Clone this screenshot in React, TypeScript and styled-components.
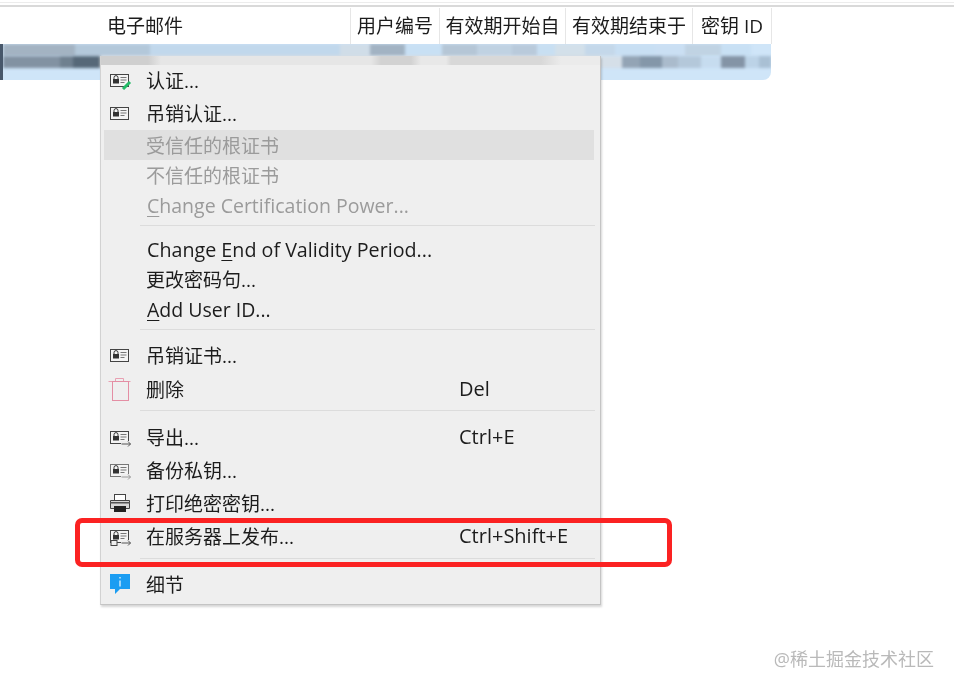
// Context menu of a key manager, over a blurred certificate table
import React from 'react';
import styled, { createGlobalStyle } from 'styled-components';

const GlobalStyle = createGlobalStyle`
  html, body {
    margin: 0;
    height: 100%;
    background: #fff;
    overflow: hidden;
  }
  #root {
    height: 100%;
  }
`;

const FONT = `"Open Sans", "Noto Sans", "Noto Sans CJK SC", sans-serif`;

const Page = styled.div`
  position: relative;
  width: 954px;
  height: 689px;
  overflow: hidden;
  font-family: ${FONT};
  font-size: 19px;
  color: #1c1c1c;
  filter: blur(0.35px);
`;

const TopRule = styled.div`
  height: 5px;
  margin-bottom: 1px;
  border-bottom: 2px solid #d9d9d9;
  background: linear-gradient(#fff 0 2px, #ececec 2px 3px, #fff 3px);
`;

const TableHeader = styled.div`
  display: grid;
  grid-template-columns: 351px 89px 126px 127px 79px;
  width: 772px;
  height: 36px;
`;

const HeaderCell = styled.div<{ $first?: boolean }>`
  display: flex;
  align-items: center;
  justify-content: ${p => (p.$first ? 'flex-start' : 'center')};
  padding-left: ${p => (p.$first ? '107px' : '0')};
  border-right: 1px solid #e6e6e6;
  white-space: nowrap;
  line-height: 36px;
  box-sizing: border-box;
`;

const BlurredRow = styled.div`
  width: 771px;
  height: 36px;
  background: #cfe5f8;
  border-radius: 0 0 8px 0;
  overflow: hidden;
  box-sizing: border-box;
  border-left: 3px solid #47576a;
`;

const Strip = styled.div`
  display: flex;
  height: 12px;
  filter: blur(1.6px);
`;

const Patch = styled.div<{ $w: number; $c: string }>`
  flex: 0 0 ${p => p.$w}px;
  background: ${p => p.$c};
`;

const stripTop: [number, string][] = [
  [72, '#a3b3c2'], [75, '#b3c8da'], [190, '#c1d8ec'], [30, '#d0dde8'],
  [35, '#a2b3c3'], [37, '#c8e0f4'], [35, '#b5c6d6'], [35, '#c0d2e2'], [25, '#b9cadb'],
  [18, '#c8dff2'], [30, '#d3e0ea'], [30, '#c4d8ea'], [40, '#c8dff3'], [30, '#cadff3'],
  [36, '#c0d3e3'], [30, '#c8e0f4'],
];

const stripMid: [number, string][] = [
  [57, '#8292a2'], [13, '#6f808f'], [27, '#566878'], [500, '#d8d8d8'],
  [22, '#d5dfe8'], [18, '#93a4b5'], [22, '#8497a9'], [16, '#aabbcc'], [23, '#b4c8da'],
  [20, '#c6dcef'], [24, '#8494a6'], [14, '#bcd3e7'], [12, '#a9c0d4'], [20, '#c3dbef'],
];

const Menu = styled.div`
  position: absolute;
  left: 100px;
  top: 56px;
  width: 501px;
  height: 549px;
  box-sizing: border-box;
  padding-top: 7px;
  background:
    linear-gradient(90deg, #cfcfcf 0 47px, #e6e6e6 60px 270px, #d2d2d2 280px 310px, #e8e8e8 320px 345px, #d8d8d8 350px 440px, #ebebeb 460px) 0 0 / 100% 9px no-repeat,
    #efefef;
  border-left: 1px solid #d2d2d2;
  border-right: 1px solid #c4c4c4;
  border-bottom: 1px solid #c4c4c4;
  box-shadow: 1px 2px 2px rgba(0, 0, 0, 0.16);
`;

const Item = styled.div<{ $h?: number; $disabled?: boolean; $active?: boolean }>`
  display: grid;
  grid-template-columns: 42px 312px 1fr;
  align-items: center;
  height: ${p => p.$h ?? 30}px;
  margin: 0 6px 0 3px;
  color: ${p => (p.$disabled ? '#9b9b9b' : '#1c1c1c')};
  background: ${p => (p.$active ? '#e0e0e0' : 'transparent')};
  white-space: nowrap;
`;

const IconSlot = styled.span`
  display: flex;
  align-items: center;
  padding-left: 4px;
`;

const LatinLabel = styled.span<{ $size?: number }>`
  font-size: ${p => p.$size ?? 19.7}px;
  padding-left: 1px;
`;

const Shortcut = styled.span`
  font-size: 20px;
  padding-left: 1px;
`;

const Mnemonic = styled.span`
  text-decoration: underline;
  text-underline-offset: 3px;
  text-decoration-thickness: 1px;
`;

const Separator = styled.div<{ $h?: number; $top?: number }>`
  height: ${p => p.$h ?? 15}px;
  box-sizing: border-box;
  padding-top: ${p => p.$top ?? 5}px;
  margin: 0 5px 0 39px;
  &::before {
    content: '';
    display: block;
    height: 1px;
    background: #dcdcdc;
  }
`;

const Highlight = styled.div`
  position: absolute;
  left: 75px;
  top: 518px;
  width: 597px;
  height: 49px;
  box-sizing: border-box;
  border: 5px solid #fb2222;
  border-radius: 7px;
`;

const Watermark = styled.div`
  position: absolute;
  right: 20px;
  top: 646px;
  font-size: 18px;
  line-height: 26px;
  color: #b9b9b9;
  white-space: nowrap;
`;

type CertKind = 'plain' | 'check' | 'export' | 'exportLight' | 'server';

// Small certificate card with a lock, optional badge on the corner
const CertIcon = ({ kind = 'plain' }: { kind?: CertKind }) => {
  const stroke = kind === 'exportLight' ? '#777' : '#444';
  const arrow = kind === 'exportLight' ? '#999' : '#555';
  const hasArrow = kind === 'export' || kind === 'exportLight' || kind === 'server';
  return (
    <svg width="24" height="20" viewBox="0 0 24 20" fill="none">
      <rect x="2.5" y="4.5" width="18" height="12" fill="#f4f4f4" stroke={stroke} />
      <rect x="5" y="9" width="6" height="4.5" fill="#333" />
      <path d="M6 9V7.6a2 2 0 0 1 4 0V9" stroke="#333" />
      <path d="M12.5 7.5h6M12.5 10h6M12.5 12.5h4" stroke="#777" />
      {kind === 'check' && <path d="M15 19l7-7" stroke="#22bb66" strokeWidth="3" />}
      {hasArrow && (
        <>
          <rect x="13" y="14" width="11" height="6" fill="#efefef" />
          <path d="M13.5 17h9M20 14.5l2.5 2.5-2.5 2.5" stroke={arrow} />
        </>
      )}
      {kind === 'server' && <rect x="3" y="14.5" width="6" height="5" fill="#efefef" stroke="#444" />}
    </svg>
  );
};

const TrashIcon = () => (
  <svg width="24" height="26" viewBox="0 0 24 26" fill="none" stroke="#e8a0b2">
    <path d="M0.5 5.5h22M7.5 5.5V2.5h8v3" />
    <rect x="4.5" y="5.5" width="16" height="19" stroke="#e48ea4" />
  </svg>
);

const PrinterIcon = () => (
  <svg width="24" height="22" viewBox="0 0 24 22" fill="none">
    <rect x="6.5" y="2.5" width="11" height="6" fill="#fff" stroke="#444" />
    <path d="M2.5 8.5h19v8h-19z" fill="#d8d8d8" stroke="#444" />
    <rect x="6" y="14" width="12" height="6" fill="#222" />
    <rect x="2" y="10" width="20" height="1.5" fill="#555" />
  </svg>
);

const InfoIcon = () => (
  <svg width="24" height="24" viewBox="0 0 24 24">
    <path d="M2 2h20v15H12l-5 5v-5H2z" fill="#1b9df2" />
    <path d="M12 5v1.5M12 8.5v6" stroke="#bfe4fb" strokeWidth="1.6" />
  </svg>
);

const App = () => (
  <>
    <GlobalStyle />
    <Page>
      <TopRule />
      <TableHeader>
        <HeaderCell $first>电子邮件</HeaderCell>
        <HeaderCell>用户编号</HeaderCell>
        <HeaderCell>有效期开始自</HeaderCell>
        <HeaderCell>有效期结束于</HeaderCell>
        <HeaderCell>密钥 ID</HeaderCell>
      </TableHeader>
      <BlurredRow>
        <Strip>
          {stripTop.map(([w, c], i) => <Patch key={i} $w={w} $c={c} />)}
        </Strip>
        <Strip>
          {stripMid.map(([w, c], i) => <Patch key={i} $w={w} $c={c} />)}
        </Strip>
      </BlurredRow>

      <Menu>
        <Item $h={33}><IconSlot><CertIcon kind="check" /></IconSlot><span>认证...</span></Item>
        <Item $h={34}><IconSlot><CertIcon /></IconSlot><span>吊销认证...</span></Item>
        <Item $disabled $active><span /><span>受信任的根证书</span></Item>
        <Item $disabled><span /><span>不信任的根证书</span></Item>
        <Item $disabled><span /><LatinLabel $size={19.5}><Mnemonic>C</Mnemonic>hange Certification Power...</LatinLabel></Item>
        <Separator $h={14} />
        <Item><span /><LatinLabel>Change <Mnemonic>E</Mnemonic>nd of Validity Period...</LatinLabel></Item>
        <Item><span /><span>更改密码句...</span></Item>
        <Item><span /><LatinLabel $size={19.5}><Mnemonic>A</Mnemonic>dd User ID...</LatinLabel></Item>
        <Separator $h={14} />
        <Item $h={34}><IconSlot><CertIcon /></IconSlot><span>吊销证书...</span></Item>
        <Item $h={33}><IconSlot><TrashIcon /></IconSlot><span>删除</span><Shortcut>Del</Shortcut></Item>
        <Separator />
        <Item $h={33}><IconSlot><CertIcon kind="export" /></IconSlot><span>导出...</span><Shortcut>Ctrl+E</Shortcut></Item>
        <Item $h={33}><IconSlot><CertIcon kind="exportLight" /></IconSlot><span>备份私钥...</span></Item>
        <Item $h={33}><IconSlot><PrinterIcon /></IconSlot><span>打印绝密密钥...</span></Item>
        <Item $h={33}><IconSlot><CertIcon kind="server" /></IconSlot><span>在服务器上发布...</span><Shortcut>Ctrl+Shift+E</Shortcut></Item>
        <Separator $top={6} />
        <Item $h={33}><IconSlot><InfoIcon /></IconSlot><span>细节</span></Item>
      </Menu>

      <Highlight />
      <Watermark>@稀土掘金技术社区</Watermark>
    </Page>
  </>
);

export default App;
